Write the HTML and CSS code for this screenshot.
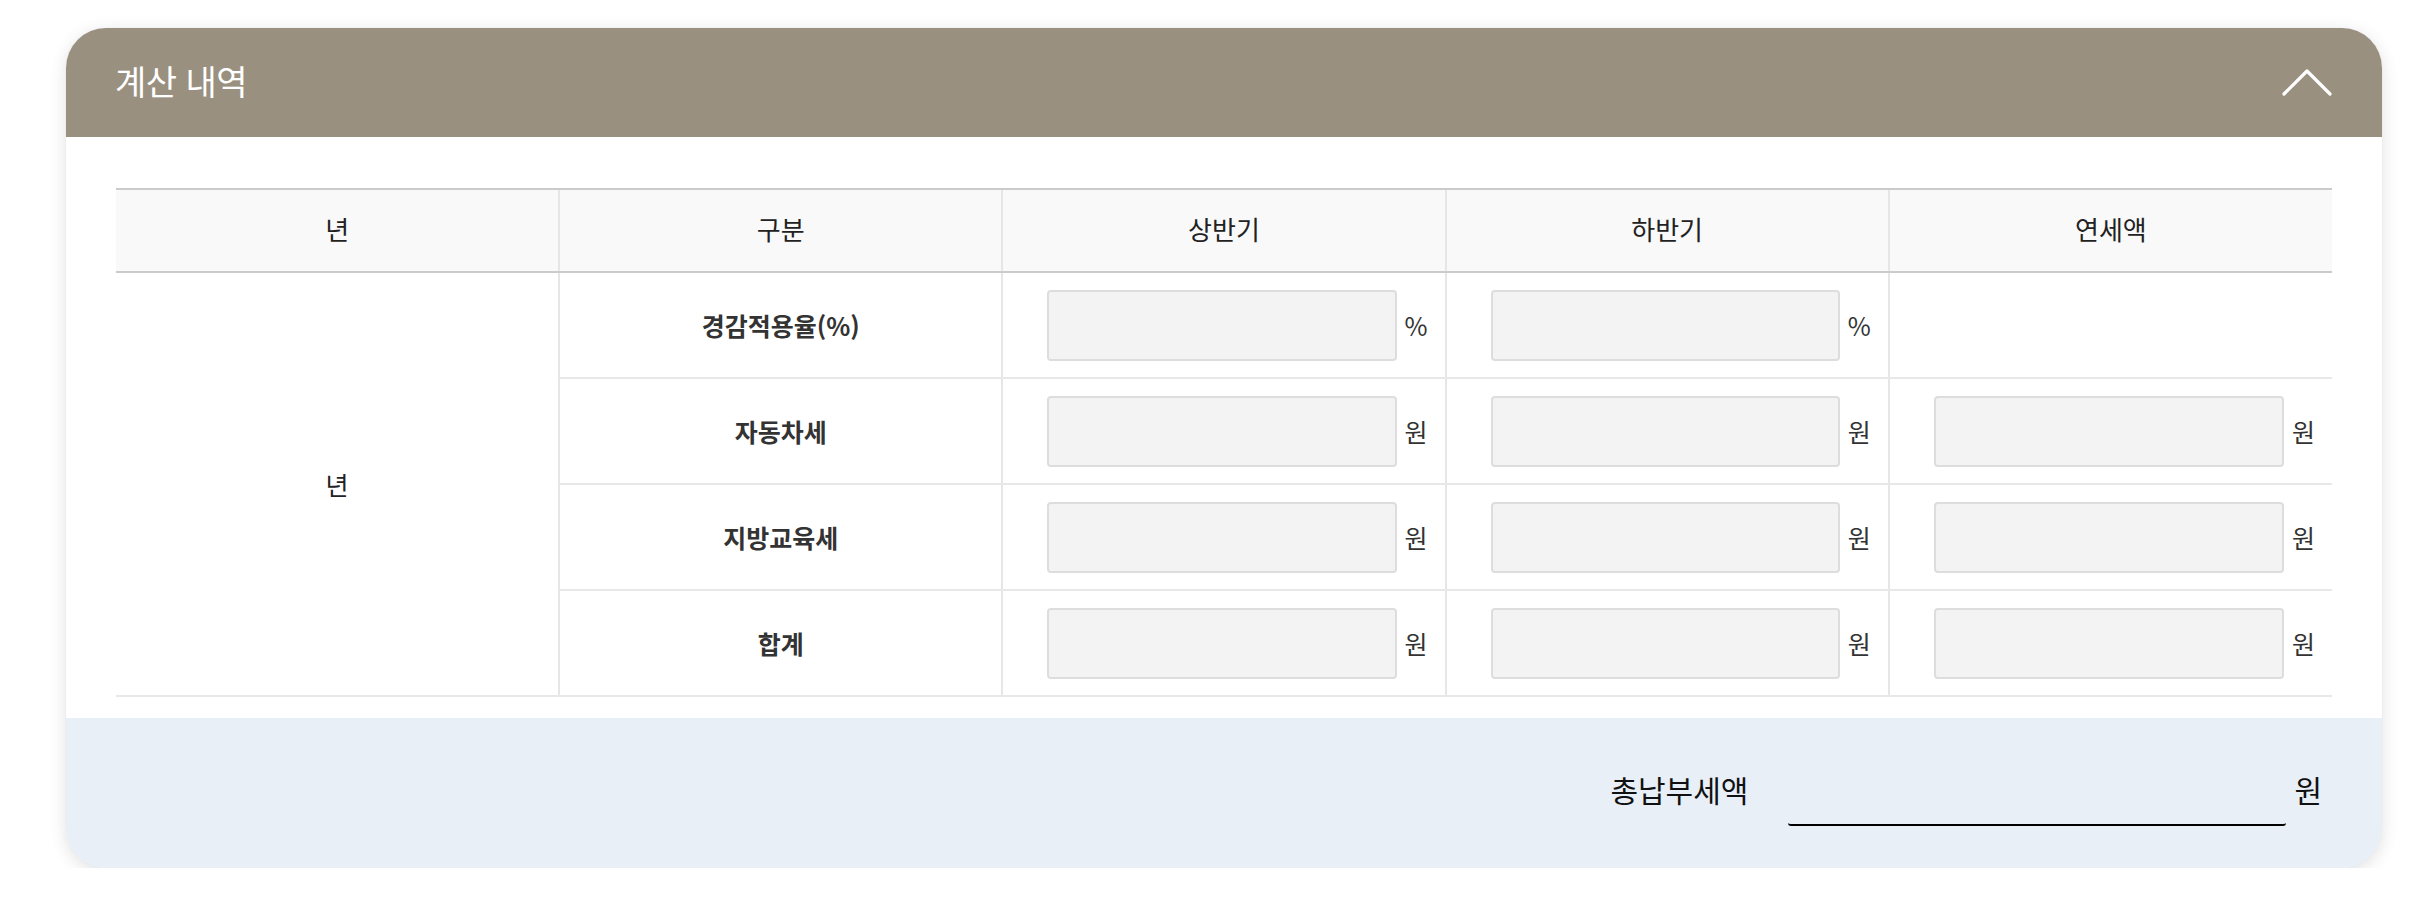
FILE: index.html
```html
<!DOCTYPE html>
<html lang="ko">
<head>
<meta charset="utf-8">
<title>계산 내역</title>
<link rel="stylesheet" href="styles.css">
</head>
<body>
<section class="card">
  <header class="card-head">
    <h2 class="card-title">계산 내역</h2>
    <button class="toggle" type="button" aria-label="접기">
      <svg width="50" height="28" viewBox="0 0 50 28"><polyline points="2,25 25,2 48,25" fill="none" stroke="#fff" stroke-width="3.2" stroke-linecap="round" stroke-linejoin="round"/></svg>
    </button>
  </header>
  <div class="card-body">
    <table class="calc">
      <thead>
        <tr>
          <th>년</th>
          <th>구분</th>
          <th>상반기</th>
          <th>하반기</th>
          <th>연세액</th>
        </tr>
      </thead>
      <tbody>
        <tr>
          <td class="year" rowspan="4">년</td>
          <th class="label" scope="row">경감적용율(%)</th>
          <td><div class="field"><input class="box" type="text" readonly><span class="unit">%</span></div></td>
          <td><div class="field"><input class="box" type="text" readonly><span class="unit">%</span></div></td>
          <td></td>
        </tr>
        <tr>
          <th class="label" scope="row">자동차세</th>
          <td><div class="field"><input class="box" type="text" readonly><span class="unit">원</span></div></td>
          <td><div class="field"><input class="box" type="text" readonly><span class="unit">원</span></div></td>
          <td><div class="field"><input class="box" type="text" readonly><span class="unit">원</span></div></td>
        </tr>
        <tr>
          <th class="label" scope="row">지방교육세</th>
          <td><div class="field"><input class="box" type="text" readonly><span class="unit">원</span></div></td>
          <td><div class="field"><input class="box" type="text" readonly><span class="unit">원</span></div></td>
          <td><div class="field"><input class="box" type="text" readonly><span class="unit">원</span></div></td>
        </tr>
        <tr>
          <th class="label" scope="row">합계</th>
          <td><div class="field"><input class="box" type="text" readonly><span class="unit">원</span></div></td>
          <td><div class="field"><input class="box" type="text" readonly><span class="unit">원</span></div></td>
          <td><div class="field"><input class="box" type="text" readonly><span class="unit">원</span></div></td>
        </tr>
      </tbody>
    </table>
  </div>
  <footer class="card-foot">
    <span class="total-label">총납부세액</span>
    <input class="total-input" type="text" readonly>
    <span class="total-unit">원</span>
  </footer>
</section>
</body>
</html>
```

FILE: styles.css
```css
* { box-sizing: border-box; }

html, body {
  margin: 0;
  padding: 0;
  background: #ffffff;
  font-family: "Noto Sans CJK KR", "Noto Sans", sans-serif;
  color: #222;
}

body {
  padding: 28px 0 0 66px;
}

.card {
  width: 2316px;
  border-radius: 40px;
  overflow: hidden;
  background: #fff;
  box-shadow: 0 4px 18px rgba(0, 0, 0, 0.12), 0 0 2px rgba(0, 0, 0, 0.06);
}

.card-head {
  height: 109px;
  background: #9a9080;
  display: flex;
  align-items: center;
  justify-content: space-between;
  padding: 0 50px 0 49px;
}

.card-title {
  margin: 0 0 4px;
  font-size: 34px;
  font-weight: 400;
  color: #fff;
  letter-spacing: -0.5px;
}

.toggle {
  border: 0;
  background: none;
  padding: 0;
  width: 50px;
  height: 28px;
  display: flex;
}

.card-body {
  padding: 51px 50px 21px 50px;
}

.calc {
  width: 100%;
  table-layout: fixed;
  border-collapse: collapse;
  font-size: 25px;
}

.calc thead th {
  height: 83px;
  background: #f9f9f9;
  font-weight: 400;
  font-size: 26px;
  color: #222;
  border-top: 2px solid #cbcbcb;
  border-bottom: 2px solid #cbcbcb;
  border-left: 2px solid #e6e6e6;
  padding: 0 0 5px;
}

.calc thead th:first-child { border-left: 0; }

.calc tbody td,
.calc tbody th {
  height: 106px;
  border-bottom: 2px solid #e8e8e8;
  border-left: 2px solid #e6e6e6;
  padding: 0 17px 0 44px;
  vertical-align: middle;
}

.calc tbody td.year {
  border-left: 0;
  text-align: center;
  padding: 0;
  font-weight: 400;
  color: #222;
}

.calc tbody th.label {
  padding: 0;
  text-align: center;
  font-weight: 700;
  color: #333;
}

.field {
  display: flex;
  align-items: center;
  gap: 8px;
}

.box {
  width: 352px;
  height: 71px;
  background: #f3f3f3;
  border: 2px solid #dddddd;
  border-radius: 4px;
  margin: 0;
  padding: 0 10px;
  font: inherit;
}

.unit {
  font-size: 25px;
  color: #333;
}

.card-foot {
  height: 150px;
  background: #e8eff7;
  display: flex;
  align-items: center;
  justify-content: flex-end;
  padding: 0 60px 0 0;
}

.total-label {
  font-size: 30px;
  color: #111;
  margin: 0 40px 8px 0;
}

.total-input {
  width: 498px;
  height: 60px;
  margin: 6px 8px 0 0;
  border: 0;
  border-bottom: 2px solid #000;
  border-radius: 0 0 3px 3px;
  background: transparent;
  font: inherit;
  padding: 0;
}

.total-unit {
  font-size: 30px;
  color: #111;
  margin-bottom: 8px;
}
```
